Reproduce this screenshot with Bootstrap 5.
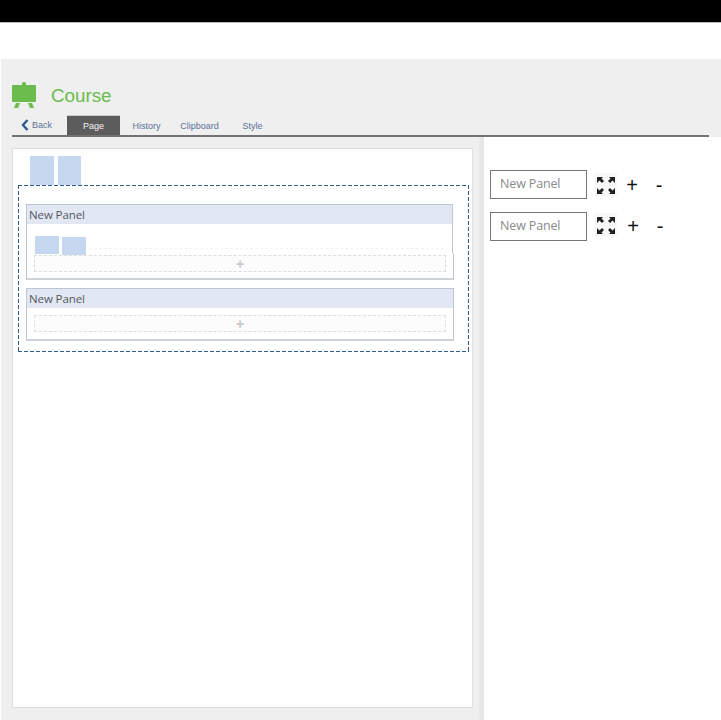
<!DOCTYPE html>
<html lang="en">
<head>
    <meta charset="UTF-8">
    <meta name="viewport" content="width=device-width, initial-scale=1.0">
    <title>Course</title>
    <link href="https://cdn.jsdelivr.net/npm/bootstrap@5.3.0/dist/css/bootstrap.min.css" rel="stylesheet">
    <style>
        html, body { height: 720px; overflow: hidden; background: #fff; }
        .top-bar { height: 23px; background: #000; border-bottom: 1px solid #bbb; }
        .top-gap { height: 36px; }
        .work-area { height: 661px; margin-left: 1px; background: #efefef; }
        .course-head { height: 56px; padding: 23px 0 0 11px; }
        .course-title { margin: 1px 0 0 14px; font: 18.800px/26px "Liberation Sans", Arial, sans-serif; color: #6abd4c; }
        .tab-strip { height: 22px; margin: 0 12px 0 11px; border-bottom: 2px solid #737373; }
        .tab-item { width: 53px; height: 20px; font: 9px/22px "Liberation Sans", Arial, sans-serif; color: #5a7299; text-align: center; }
        .tab-back { width: 55px; padding-left: 9px; gap: 3px; line-height: 20px; }
        .tab-active { background: #5c5c5c; color: #f4f4f4; border-top: 1px solid #ccc; line-height: 20px; }
        .work-body { height: 583px; }
        .left-side { width: 483px; padding: 11px 10px 12px 11px; flex: none; background: linear-gradient(to right, #efefef 477px, #e3e3e3 481px, #e8e8e8 483px); }
        .page-sheet { width: 461px; height: 560px; background: #fff; border: 1px solid #dedede; padding: 7px 3px 0 5px; }
        .blue-block { display: block; flex: none; background: #c6d8f0; position: relative; }
        .top-blocks { gap: 4px; padding-left: 12px; height: 29px; }
        .dash-zone {
            width: 451px; height: 167px; padding: 19px 0 0 8px;
            background:
                linear-gradient(to right, #2f5b8e 4px, transparent 4px) 0 0 / 6px 1px repeat-x,
                linear-gradient(to right, #2f5b8e 4px, transparent 4px) 0 100% / 6px 1px repeat-x,
                linear-gradient(to bottom, #2f5b8e 4px, transparent 4px) 0 0 / 1px 6px repeat-y,
                linear-gradient(to bottom, #2f5b8e 4px, transparent 4px) 100% 0 / 1px 6px repeat-y;
        }
        .panel-box { border: 1px solid #bcc7d3; border-bottom: 2px solid #ccd1d7; width: 428px; background: #fff; }
        .panel-first { width: 427px; height: 76px; margin-bottom: 8px; border-bottom: 0; }
        .panel-second { height: 53px; }
        .panel-title { height: 19px; background: #e2e8f3; padding-left: 2px; font: 11.500px/19px "Open Sans", sans-serif; letter-spacing: -.1px; color: #54565f; }
        .inner-blocks { gap: 3px; padding: 12px 0 0 8px; height: 29px; }
        .faint-rule { height: 13px; margin-right: 8px; border-bottom: 1px dashed #f2f2f2; }
        .panel-lower { height: 27px; margin-right: -2px; padding-top: 2px; background: #fff; border-right: 1px solid #bcc7d3; border-bottom: 2px solid #ccd1d7; }
        .drop-slot { height: 17px; margin: 0 7px; background: #fcfcfc; border: 1px dashed #ddd; color: #c9c9c9; font: bold 14px/14px "Liberation Sans", sans-serif; }
        .slot-second { margin-top: 7px; }
        .right-side { flex: 1; background: #fff; padding: 33px 0 0 6px; }
        .name-row { height: 42px; }
        .name-input { width: 97px; height: 29px; border: 1px solid #767676; padding-left: 9px; font: 12.500px/26px "Open Sans", sans-serif; letter-spacing: -.15px; color: #8a8a8a; }
        .expand-icon { margin-left: 8px; flex: none; background: #f8f8f8; }
        .icon-first { margin-top: 3px; }
        .icon-second { margin-top: 1px; }
        .row-sign { font: 20px/29px "Liberation Sans", Arial, sans-serif; color: #111; text-align: center; }
        .sign-first { line-height: 31px; }
        .sign-plus { width: 20px; margin-left: 5px; }
        .sign-plus-second { margin-left: 6px; }
        .sign-minus { width: 14px; margin-left: 10px; }
    </style>
</head>
<body>
    <div class="top-bar"></div>
    <div class="top-gap"></div>

    <div class="work-area d-flex flex-column">
        <!-- Title -->
        <div class="course-head d-flex align-items-start">
            <svg width="25" height="26" viewBox="0 0 25 26">
                <rect x="0" y="3" width="24" height="17" rx="1" fill="#6abd4c"/>
                <rect x="10" y="0" width="4" height="4" rx="1.500" fill="#6abd4c"/>
                <path d="M4 21h4l-2 5H2zM16 21h4l2 5h-4z" fill="#6abd4c"/>
            </svg>
            <span class="course-title">Course</span>
        </div>

        <!-- Tabs -->
        <div class="tab-strip d-flex align-items-end">
            <div class="tab-item tab-back d-flex align-items-center">
                <svg width="8" height="12" viewBox="0 0 8 12"><path d="M6.500 1 2 6l4.500 5" fill="none" stroke="#2f5b8e" stroke-width="2.400"/></svg>
                <span>Back</span>
            </div>
            <div class="tab-item tab-active">Page</div>
            <div class="tab-item">History</div>
            <div class="tab-item">Clipboard</div>
            <div class="tab-item">Style</div>
        </div>

        <div class="work-body d-flex">
            <div class="left-side">
                <div class="page-sheet">
                    <div class="top-blocks d-flex">
                        <span class="blue-block" style="width:24px;height:29px"></span>
                        <span class="blue-block" style="width:23px;height:29px"></span>
                    </div>
                    <div class="dash-zone">
                        <div class="panel-box panel-first">
                            <div class="panel-title">New Panel</div>
                            <div class="inner-blocks d-flex">
                                <span class="blue-block" style="width:24px;height:18px"></span>
                                <span class="blue-block" style="width:24px;height:18px;margin-top:1px"></span>
                                <div class="faint-rule flex-fill"></div>
                            </div>
                            <div class="panel-lower">
                                <div class="drop-slot d-flex align-items-center justify-content-center">+</div>
                            </div>
                        </div>
                        <div class="panel-box panel-second">
                            <div class="panel-title">New Panel</div>
                            <div class="drop-slot slot-second d-flex align-items-center justify-content-center">+</div>
                        </div>
                    </div>
                </div>
            </div>

            <!-- Panel names -->
            <div class="right-side">
                <div class="name-row d-flex align-items-start">
                    <div class="name-input">New Panel</div>
                    <svg class="expand-icon icon-first" width="22" height="24" viewBox="0 0 22 24">
                        <path fill="#222" d="M2 4h6L6.500 5.500 9 8 7 10 4.500 7.500 2 10zM20 4h-6l1.500 1.500L13 8l2 2 2.500-2.500L20 10zM2 21h6l-1.500-1.500L9 17l-2-2-2.500 2.500L2 15zM20 21h-6l1.500-1.500L13 17l2-2 2.500 2.500L20 15z"/>
                    </svg>
                    <span class="row-sign sign-first sign-plus">+</span>
                    <span class="row-sign sign-first sign-minus">-</span>
                </div>
                <div class="name-row d-flex align-items-start">
                    <div class="name-input">New Panel</div>
                    <svg class="expand-icon icon-second" width="22" height="24" viewBox="0 0 22 24">
                        <path fill="#222" d="M2 4h6L6.500 5.500 9 8 7 10 4.500 7.500 2 10zM20 4h-6l1.500 1.500L13 8l2 2 2.500-2.500L20 10zM2 21h6l-1.500-1.500L9 17l-2-2-2.500 2.500L2 15zM20 21h-6l1.500-1.500L13 17l2-2 2.500 2.500L20 15z"/>
                    </svg>
                    <span class="row-sign sign-plus sign-plus-second">+</span>
                    <span class="row-sign sign-minus">-</span>
                </div>
            </div>
        </div>
    </div>

    <script src="https://cdn.jsdelivr.net/npm/bootstrap@5.3.0/dist/js/bootstrap.bundle.min.js"></script>
</body>
</html>
